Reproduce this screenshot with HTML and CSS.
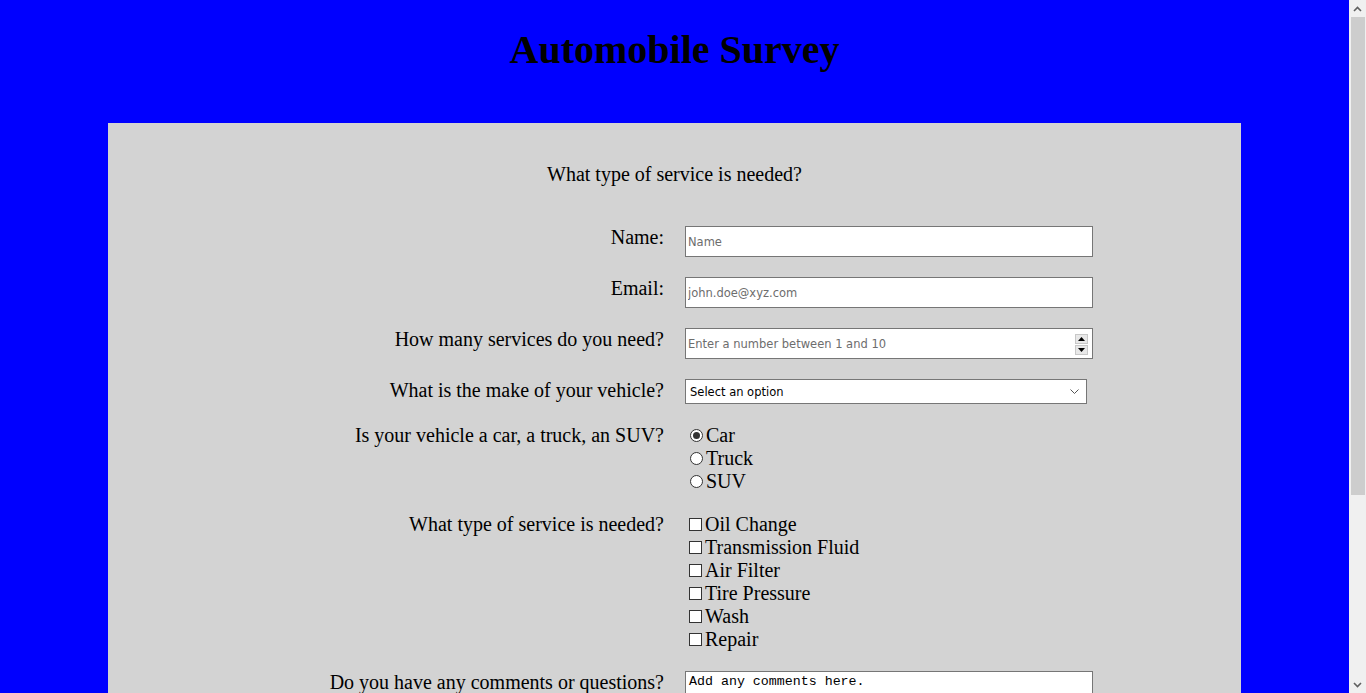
FILE: index.html
```html
<!DOCTYPE html>
<html lang="en">
<head>
<meta charset="utf-8">
<title>Automobile Survey</title>
<link rel="stylesheet" href="styles.css">
</head>
<body>
<div class="page">
<header class="header">
  <h1 class="title">Automobile Survey</h1>
</header>
<main class="panel">
  <p class="intro">What type of service is needed?</p>
  <form class="form">
    <label class="label" for="name">Name:</label>
    <div class="field"><input class="text" id="name" type="text" placeholder="Name"></div>

    <label class="label" for="email">Email:</label>
    <div class="field"><input class="text" id="email" type="email" placeholder="john.doe@xyz.com"></div>

    <label class="label" for="number">How many services do you need?</label>
    <div class="field">
      <span class="numwrap">
        <input class="text num" id="number" type="number" min="1" max="10" placeholder="Enter a number between 1 and 10">
        <span class="spin">
          <span class="spinbtn"><svg width="7" height="4" viewBox="0 0 7 4"><path d="M3.5 0 L7 4 L0 4 Z" fill="#000"/></svg></span>
          <span class="spinbtn"><svg width="7" height="4" viewBox="0 0 7 4"><path d="M0 0 L7 0 L3.5 4 Z" fill="#000"/></svg></span>
        </span>
      </span>
    </div>

    <label class="label" for="make">What is the make of your vehicle?</label>
    <div class="field">
      <span class="selwrap">
        <select class="select" id="make">
          <option>Select an option</option>
          <option>Ford</option>
          <option>Toyota</option>
          <option>Honda</option>
        </select>
        <svg class="chev" width="9" height="5" viewBox="0 0 9 5"><path d="M0.5 0.5 L4.5 4.5 L8.5 0.5" fill="none" stroke="#555" stroke-width="1"/></svg>
      </span>
    </div>

    <div class="label">Is your vehicle a car, a truck, an SUV?</div>
    <div class="field list">
      <label class="opt"><input class="radio" type="radio" name="type" checked>Car</label>
      <label class="opt"><input class="radio" type="radio" name="type">Truck</label>
      <label class="opt"><input class="radio" type="radio" name="type">SUV</label>
    </div>

    <div class="label">What type of service is needed?</div>
    <div class="field list">
      <label class="opt"><input class="check" type="checkbox">Oil Change</label>
      <label class="opt"><input class="check" type="checkbox">Transmission Fluid</label>
      <label class="opt"><input class="check" type="checkbox">Air Filter</label>
      <label class="opt"><input class="check" type="checkbox">Tire Pressure</label>
      <label class="opt"><input class="check" type="checkbox">Wash</label>
      <label class="opt"><input class="check" type="checkbox">Repair</label>
    </div>

    <label class="label" for="comments">Do you have any comments or questions?</label>
    <div class="field"><textarea class="area" id="comments" rows="4">Add any comments here.</textarea></div>

    <div class="label"></div>
    <div class="field"><button class="submit" type="submit">Submit</button></div>
  </form>
</main>
</div>
<div class="vscroll" aria-hidden="true">
  <div class="sbtn"><svg width="9" height="6" viewBox="0 0 9 6"><path d="M1 5 L4.5 1.5 L8 5" fill="none" stroke="#606060" stroke-width="1.6"/></svg></div>
  <div class="strack"><div class="sthumb"></div></div>
  <div class="sbtn"><svg width="9" height="6" viewBox="0 0 9 6"><path d="M1 1 L4.5 4.5 L8 1" fill="none" stroke="#606060" stroke-width="1.6"/></svg></div>
</div>
</body>
</html>
```
FILE: styles.css
```css
html, body {
  margin: 0;
  padding: 0;
  height: 100%;
  overflow: hidden;
}
body {
  display: flex;
  background: #0000ff;
  font-family: "Liberation Serif", "Times New Roman", serif;
  color: #000;
  font-size: 20px;
  line-height: 23px;
}
.page {
  flex: 1;
  height: 100%;
  overflow-y: auto;
  scrollbar-width: none;
}
.page::-webkit-scrollbar {
  display: none;
}
.vscroll {
  width: 17px;
  height: 100%;
  background: #f0f0f0;
  display: flex;
  flex-direction: column;
  flex-shrink: 0;
}
.sbtn {
  height: 17px;
  display: flex;
  align-items: center;
  justify-content: center;
}
.strack {
  flex: 1;
  display: flex;
  flex-direction: column;
}
.sthumb {
  height: 478px;
  margin: 0 1px 0 2px;
  background: #cdcdcd;
}
.header {
  padding: 27px 0 50px;
}
.title {
  margin: 0;
  text-align: center;
  font-size: 40px;
  line-height: 46px;
  font-weight: bold;
}
.panel {
  width: 1133px;
  margin: 0 auto 96px;
  background: #d3d3d3;
  padding: 40px 0 60px;
  box-sizing: border-box;
}
.intro {
  margin: 0 0 40px;
  text-align: center;
}
.form {
  display: grid;
  grid-template-columns: 1fr 1fr;
  column-gap: 21px;
  row-gap: 20px;
}
.label {
  text-align: right;
}
.field {
  text-align: left;
}
.text {
  box-sizing: border-box;
  width: 408px;
  height: 31px;
  border: 1px solid #767676;
  background: #fff;
  padding: 0 2px;
  font-family: "DejaVu Sans", Verdana, sans-serif;
  font-size: 11.5px;
  color: #000;
  margin: 0;
  display: block;
}
.text::placeholder {
  color: #6d6d6d;
}
.num {
  -moz-appearance: textfield;
}
.num::-webkit-inner-spin-button,
.num::-webkit-outer-spin-button {
  -webkit-appearance: none;
  margin: 0;
}
.numwrap {
  position: relative;
  display: block;
  width: 408px;
}
.spin {
  position: absolute;
  right: 5px;
  top: 6px;
  width: 13px;
  display: flex;
  flex-direction: column;
  gap: 1px;
}
.spinbtn {
  height: 8px;
  background: #e8e8e8;
  border: 1px solid #c8c8c8;
  display: flex;
  align-items: center;
  justify-content: center;
}
.selwrap {
  position: relative;
  display: block;
  width: 402px;
}
.select {
  -webkit-appearance: none;
  appearance: none;
  box-sizing: border-box;
  width: 402px;
  height: 25px;
  border: 1px solid #767676;
  border-radius: 0;
  background: #fff;
  padding: 0 4px;
  font-family: "DejaVu Sans", Verdana, sans-serif;
  font-size: 11.5px;
  color: #000;
  margin: 0;
  display: block;
}
.chev {
  position: absolute;
  right: 8px;
  top: 10px;
  pointer-events: none;
}
.list {
  display: flex;
  flex-direction: column;
}
.opt {
  display: block;
  height: 23px;
}
.radio {
  -webkit-appearance: none;
  appearance: none;
  box-sizing: border-box;
  width: 13px;
  height: 13px;
  margin: 3px 3px 0 5px;
  border: 1px solid #333;
  border-radius: 50%;
  background: #fff;
  vertical-align: 0;
  position: relative;
}
.radio:checked::after {
  content: "";
  position: absolute;
  left: 2px;
  top: 2px;
  width: 7px;
  height: 7px;
  border-radius: 50%;
  background: #333;
}
.check {
  -webkit-appearance: none;
  appearance: none;
  box-sizing: border-box;
  width: 13px;
  height: 13px;
  margin: 3px 3px 3px 4px;
  border: 1px solid #333;
  background: #fff;
  vertical-align: -3px;
}
.area {
  box-sizing: border-box;
  width: 408px;
  height: 80px;
  border: 1px solid #767676;
  background: #fff;
  padding: 2px 3px;
  font-family: "Liberation Mono", "Courier New", monospace;
  font-size: 13.3px;
  line-height: 15px;
  color: #000;
  margin: 0;
  resize: both;
  display: block;
}
.submit {
  font-family: "DejaVu Sans", Verdana, sans-serif;
  font-size: 13px;
  padding: 4px 12px;
}
```
